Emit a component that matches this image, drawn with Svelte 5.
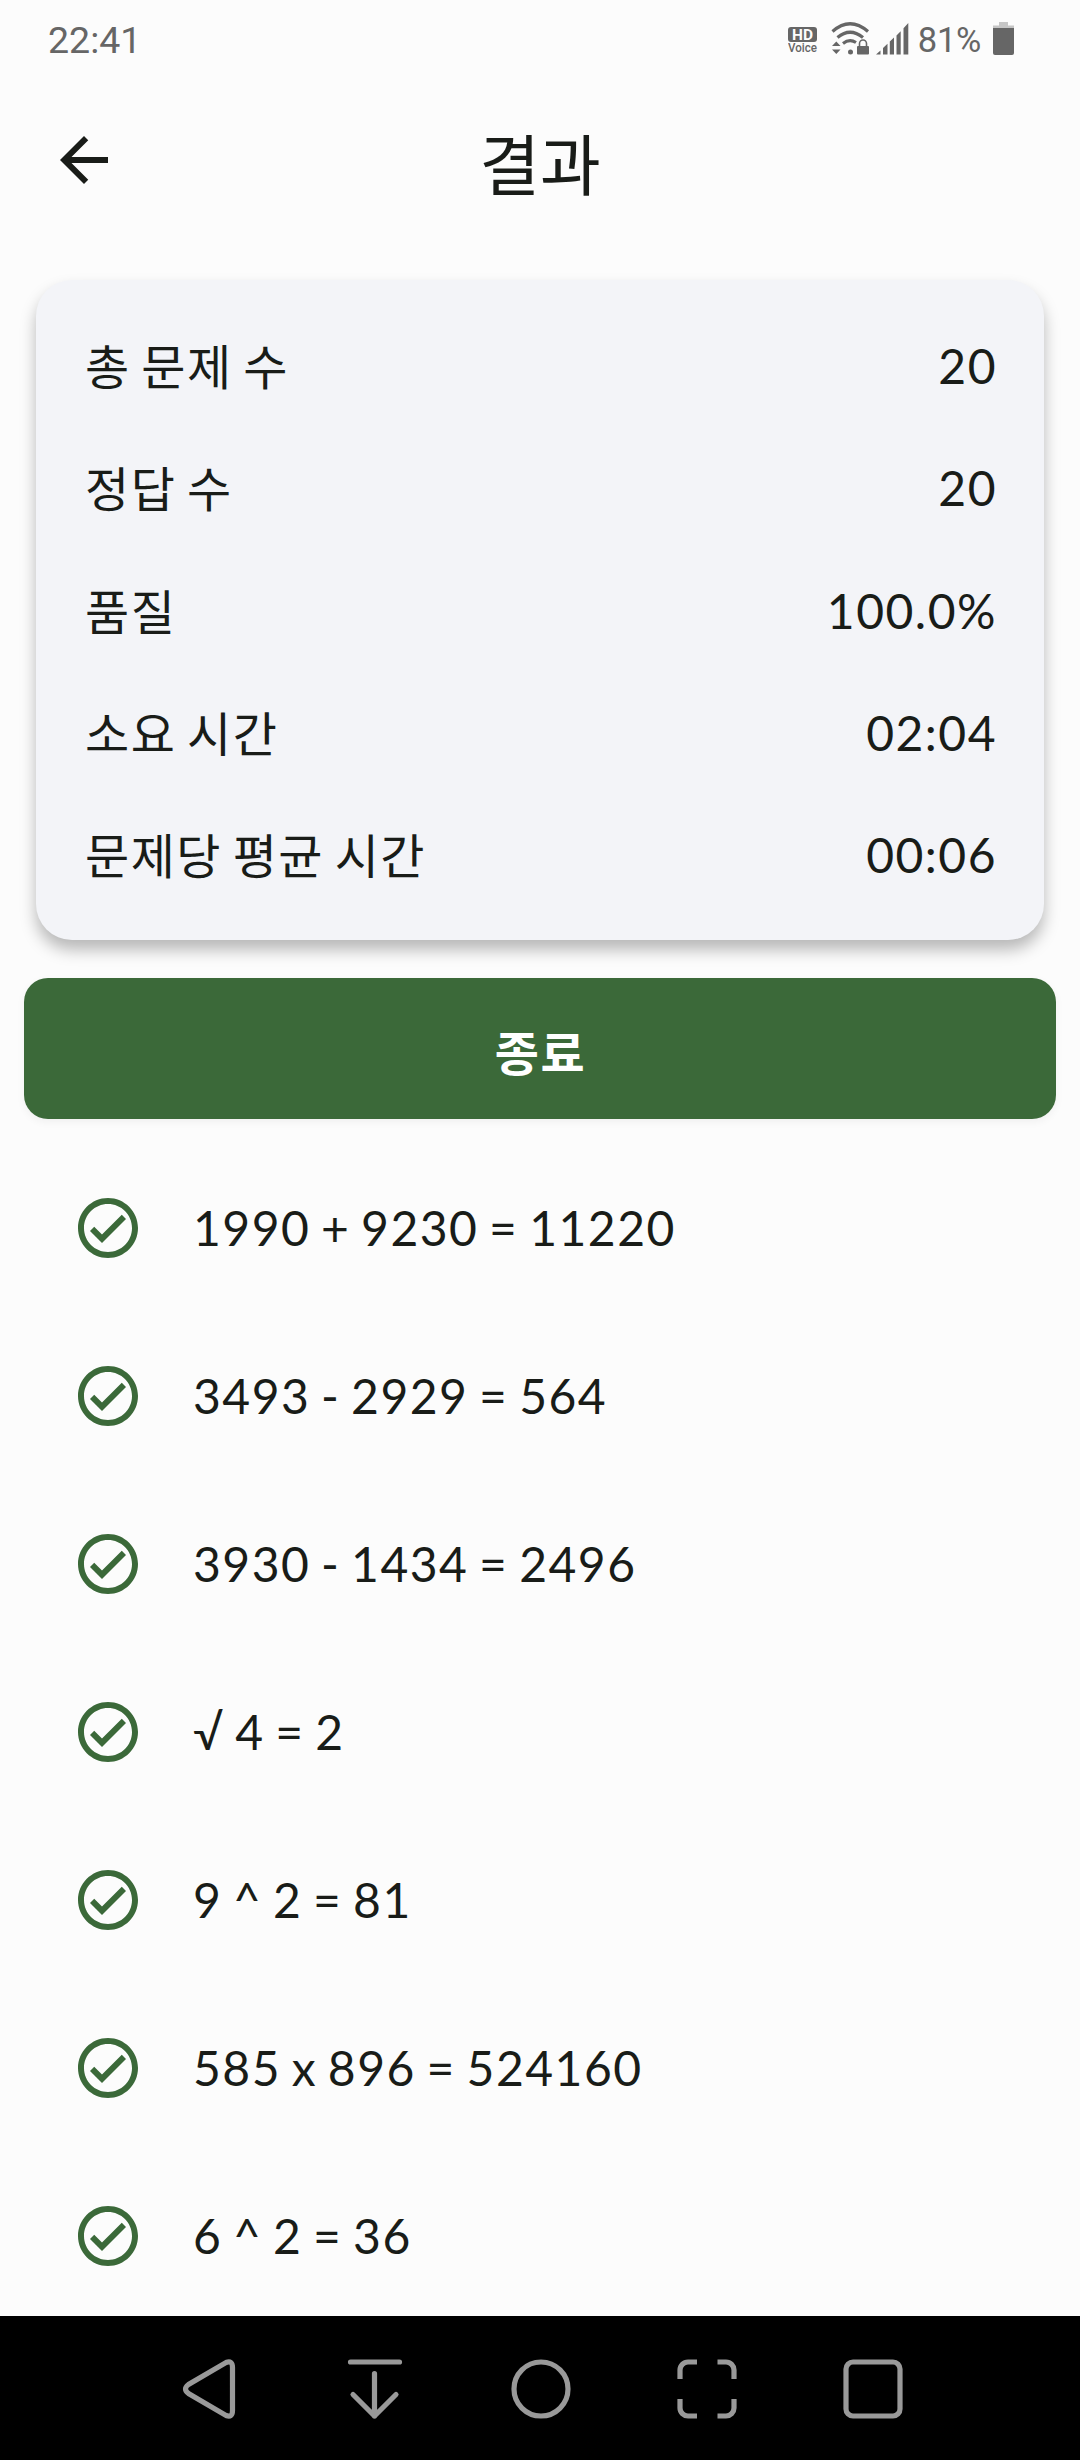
<script lang="ts">
  interface Stat {
    label: string;
    value: string;
  }

  const stats: Stat[] = [
    { label: "총 문제 수", value: "20" },
    { label: "정답 수", value: "20" },
    { label: "품질", value: "100.0%" },
    { label: "소요 시간", value: "02:04" },
    { label: "문제당 평균 시간", value: "00:06" },
  ];

  const answers: string[] = [
    "1990 + 9230 = 11220",
    "3493 - 2929 = 564",
    "3930 - 1434 = 2496",
    "√ 4 = 2",
    "9 ^ 2 = 81",
    "585 x 896 = 524160",
    "6 ^ 2 = 36",
  ];
</script>

<div class="screen">
  <div class="status-bar">
    <span class="clock">22:41</span>
    <div class="indicators">
      <svg class="hd" width="30" height="34" viewBox="0 0 30 34">
        <rect x="0" y="5" width="29" height="15" rx="3" fill="#666" />
        <text x="14.5" y="17.5" class="hd-text" text-anchor="middle" textLength="21" lengthAdjust="spacingAndGlyphs">HD</text>
        <text x="14.5" y="30" class="voice-text" text-anchor="middle" textLength="29" lengthAdjust="spacingAndGlyphs">Voice</text>
      </svg>
      <svg class="wifi" width="40" height="34" viewBox="0 0 40 34">
        <g fill="none" stroke="#666" stroke-width="3.2">
          <path d="M1.5 9.5Q19 -6 37 9.5" />
          <path d="M6.5 15.5Q19 5 32 15.5" />
          <path d="M12 21.5Q18.5 16.5 25 20.5" />
        </g>
        <g fill="#666">
          <circle cx="19.5" cy="30" r="2.5" />
          <path d="M1 24 5.3 19.5 9.5 24zM1 27.5H9.5L5.3 32z" />
          <rect x="26" y="24" width="12" height="8.5" rx="1" />
        </g>
        <path d="M28.5 24V21.5a3.5 3.5 0 0 1 7 0V24" fill="none" stroke="#666" stroke-width="1.6" />
      </svg>
      <svg class="signal" width="34" height="34" viewBox="0 0 34 34" fill="#666">
        <path d="M0 32.5 4.5 28.5V32.5zM7 26 11.5 21.8V32.5H7zM13.8 19.5 18 15.5V32.5H13.8zM20.5 13.5 24.7 9.3V32.5H20.5zM27.5 6.3 32.3 1V32.5H27.5z" />
      </svg>
      <span class="percent">81%</span>
      <svg class="battery" width="21" height="34" viewBox="0 0 21 34">
        <path d="M0 6V3.5H6V0H15V3.5H21V6z" fill="#c6c6c6" />
        <path d="M0 6H21V31a2 2 0 0 1-2 2H2a2 2 0 0 1-2-2z" fill="#666" />
      </svg>
    </div>
  </div>

  <header>
    <button class="back" aria-label="뒤로">
      <svg width="72" height="72" viewBox="0 0 24 24" fill="#191c18">
        <path d="M20 11H7.83l5.59-5.59L12 4l-8 8 8 8 1.41-1.41L7.83 13H20v-2z" />
      </svg>
    </button>
    <h1>결과</h1>
  </header>

  <section class="card">
    {#each stats as stat}
      <div class="stat">
        <span class="label">{stat.label}</span>
        <span class="value">{stat.value}</span>
      </div>
    {/each}
  </section>

  <button class="finish">종료</button>

  <ul class="answers">
    {#each answers as answer}
      <li>
        <svg width="72" height="72" viewBox="0 0 24 24" fill="#3b6939">
          <path d="M12 2C6.48 2 2 6.48 2 12s4.48 10 10 10 10-4.48 10-10S17.52 2 12 2zm0 18c-4.41 0-8-3.59-8-8s3.59-8 8-8 8 3.59 8 8-3.59 8-8 8zm4.59-12.42L10 14.17l-2.59-2.58L6 13l4 4 8-8z" />
        </svg>
        <span>{answer}</span>
      </li>
    {/each}
  </ul>

  <nav>
    <svg viewBox="-32 -32 64 64">
      <path d="M23.5-21.5V21.5Q23.5 29 17 26.5L-20.5 4.5Q-26.5 0-20.5-4.5L17-26.5Q23.5-29 23.5-21.5z" />
    </svg>
    <svg viewBox="-32 -32 64 64" stroke-linecap="round" stroke-linejoin="round">
      <path d="M-24.5-27H24.5M-.5-15.5V27M-22 5.5-.5 27 21 5.5" />
    </svg>
    <svg viewBox="-32 -32 64 64">
      <circle r="27" />
    </svg>
    <svg viewBox="-32 -32 64 64">
      <path d="M-27-10V-19a8 8 0 0 1 8-8H-10M10.5-27H19a8 8 0 0 1 8 8V-10M27 10V19a8 8 0 0 1-8 8H10.5M-10 27H-19a8 8 0 0 1-8-8V10" />
    </svg>
    <svg viewBox="-32 -32 64 64">
      <rect x="-27" y="-27" width="54" height="54" rx="7" />
    </svg>
  </nav>
</div>

<style>
  .screen {
    display: flex;
    flex-direction: column;
    width: 1080px;
    height: 2460px;
    background: #fcfcfc;
    color: #191c18;
    font-family: Lato, "Noto Sans CJK KR", sans-serif;
    font-size: 48px;
    letter-spacing: 1.5px;
    word-spacing: -3.1px;
    overflow: hidden;
  }

  .screen > * {
    flex-shrink: 0;
  }

  button {
    border: none;
    padding: 0;
    background: none;
    color: inherit;
    font: inherit;
    letter-spacing: inherit;
  }

  svg {
    display: block;
    flex: none;
  }

  .status-bar {
    display: flex;
    justify-content: space-between;
    height: 80px;
    padding: 0 66px 0 48px;
    box-sizing: border-box;
    font-family: Roboto, sans-serif;
    letter-spacing: 0;
    color: #666;
  }

  .clock {
    font-size: 37.5px;
    line-height: 81px;
  }

  .indicators {
    display: flex;
    align-items: flex-start;
    padding-top: 22px;
  }

  .hd-text {
    font: bold 15px Roboto, sans-serif;
    fill: #fcfcfc;
  }

  .voice-text {
    font: 500 12px Roboto, sans-serif;
    fill: #666;
  }

  .wifi {
    margin-left: 13px;
  }

  .signal {
    margin-left: 5px;
  }

  .percent {
    margin-left: 8px;
    font-size: 34.5px;
    line-height: 37px;
    letter-spacing: -0.3px;
  }

  .battery {
    margin-left: 12px;
  }

  header {
    display: grid;
    grid-template-columns: 1fr auto 1fr;
    align-items: center;
    height: 160px;
    padding: 0 48px;
  }

  h1 {
    margin: 0;
    padding-top: 2px;
    font-size: 66px;
    font-weight: 400;
    letter-spacing: 0;
  }

  .card {
    display: flex;
    flex-direction: column;
    height: 660px;
    margin: 40px 36px 0;
    padding: 25px 48px 0;
    box-sizing: border-box;
    border-radius: 36px;
    background: #f3f4f8;
    box-shadow: 0 10px 16px rgba(0, 0, 0, 0.27);
  }

  .stat {
    display: flex;
    justify-content: space-between;
    height: 122.25px;
    line-height: 122.25px;
  }

  .label {
    padding: 1px 0 0 1px;
  }

  .value {
    margin-right: -1px;
  }

  .finish {
    height: 141px;
    margin: 37.5px 24px 0;
    padding: 3px 0 0 1px;
    border-radius: 24px;
    background: #3b6939;
    color: #fff;
    font-weight: 700;
    box-shadow: 0 3px 9px rgba(0, 0, 0, 0.05);
  }

  .answers {
    height: 1197.5px;
    margin: 0;
    padding: 25.5px 72px 0;
    box-sizing: border-box;
    list-style: none;
    overflow: hidden;
  }

  li {
    display: flex;
    align-items: center;
    gap: 49px;
    height: 168px;
  }

  li span {
    padding-bottom: 2px;
  }

  nav {
    display: flex;
    align-items: center;
    height: 144px;
    padding: 2px 0 0 126px;
    box-sizing: border-box;
    background: #000;
  }

  nav svg {
    width: 64px;
    height: 64px;
    margin: 0 51px;
    fill: none;
    stroke: #999;
    stroke-width: 5.2;
  }
</style>
